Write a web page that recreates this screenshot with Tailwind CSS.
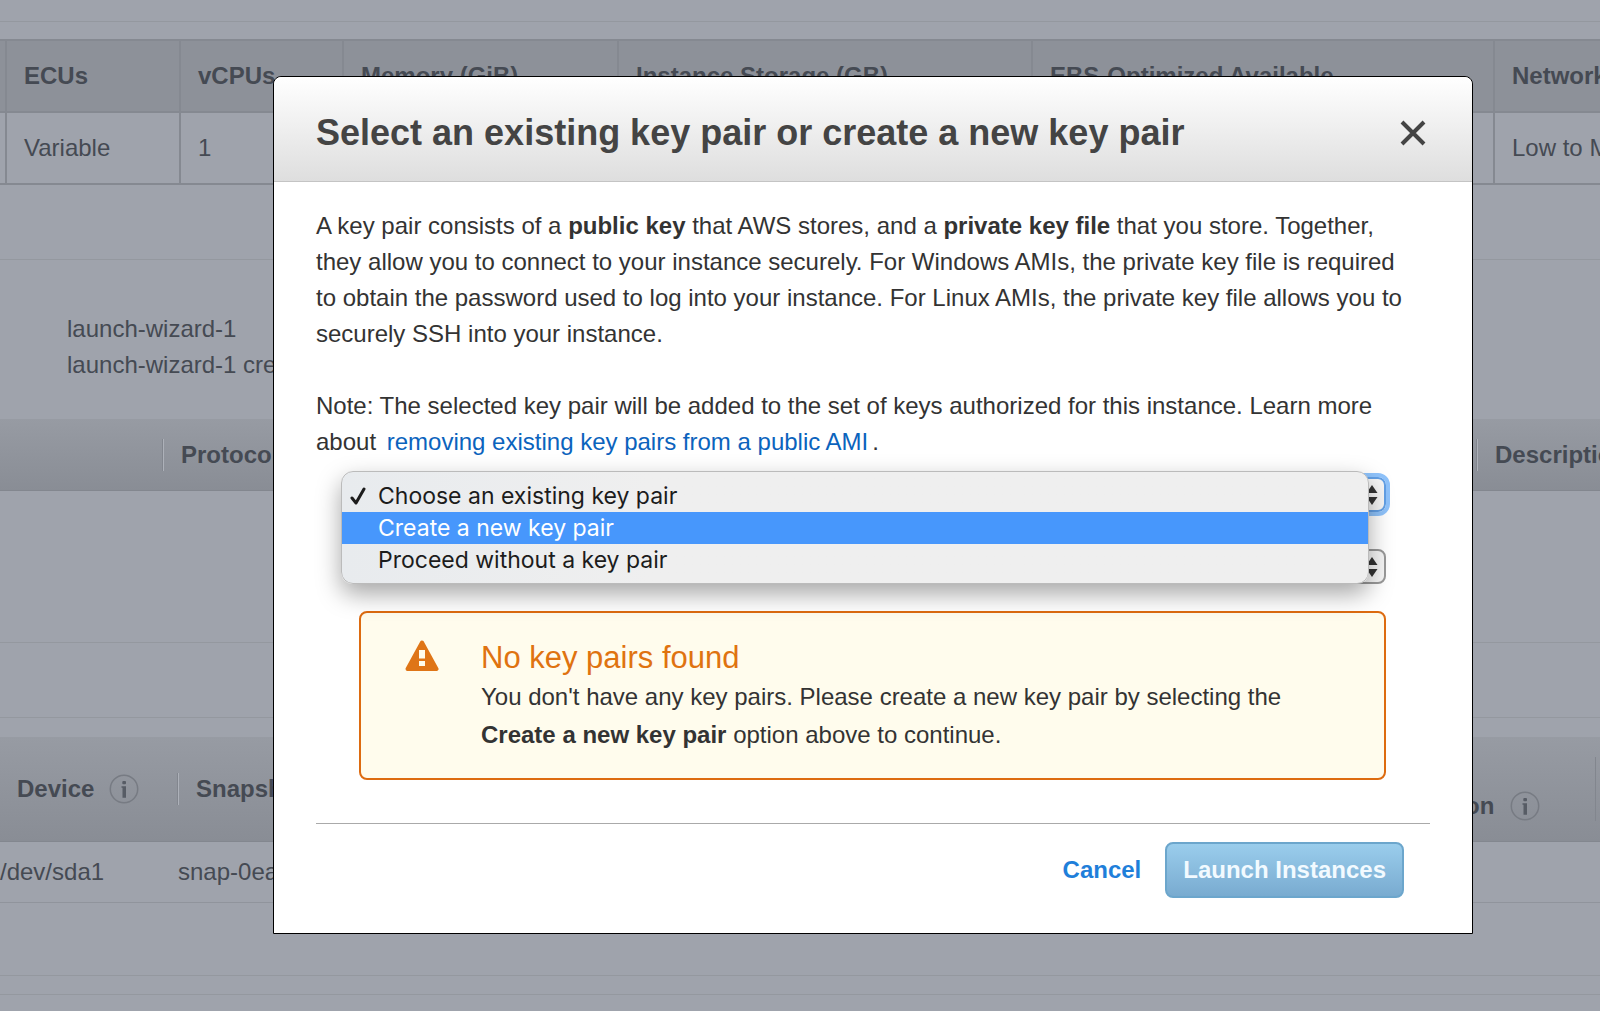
<!DOCTYPE html>
<html lang="en">
<head>
<meta charset="utf-8">
<meta name="viewport" content="width=device-width, initial-scale=1">
<title>Launch instance wizard</title>
<script src="https://cdn.jsdelivr.net/npm/@tailwindcss/browser@4"></script>
</head>
<body class="relative h-screen overflow-hidden bg-[#9fa3ac] font-['Liberation_Sans',Arial,sans-serif] text-2xl leading-9 text-[#454a53]">

<!-- Review page, dimmed behind the dialog -->
<main class="overflow-hidden whitespace-nowrap">
  <div class="h-[22px] border-b border-[#94989f]"></div>

  <section class="h-[238px] border-b border-[#94989f] pt-[17px]">
    <table class="w-full table-fixed border-collapse text-left">
      <colgroup>
        <col class="w-[6px]"><col class="w-[174px]"><col class="w-[163px]"><col class="w-[275px]"><col class="w-[414px]"><col class="w-[462px]"><col>
      </colgroup>
      <thead class="bg-[#8d9199]">
        <tr class="h-[72px] border-y-2 border-[#858991]">
          <td></td>
          <th class="border-l-2 border-[#858991] px-[17px]">ECUs</th>
          <th class="border-l-2 border-[#858991] px-[17px]">vCPUs</th>
          <th class="border-l-2 border-[#858991] px-[17px]">Memory (GiB)</th>
          <th class="border-l-2 border-[#858991] px-[17px]">Instance Storage (GB)</th>
          <th class="border-l-2 border-[#858991] px-[17px]">EBS-Optimized Available</th>
          <th class="border-l-2 border-[#858991] px-[17px]">Network Performance</th>
        </tr>
      </thead>
      <tbody>
        <tr class="h-[72px] border-b-2 border-[#858991]">
          <td></td>
          <td class="border-l-2 border-[#858991] px-[17px]">Variable</td>
          <td class="border-l-2 border-[#858991] px-[17px]">1</td>
          <td class="border-l-2 border-[#858991] px-[17px]"></td>
          <td class="border-l-2 border-[#858991] px-[17px]"></td>
          <td class="border-l-2 border-[#858991] px-[17px]"></td>
          <td class="border-l-2 border-[#858991] px-[17px]">Low to Moderate</td>
        </tr>
      </tbody>
    </table>
  </section>

  <section class="h-[383px] border-b border-[#94989f]">
    <div class="h-[159px] px-[67px] pt-[51px]">
      <p>launch-wizard-1</p>
      <p>launch-wizard-1 created</p>
    </div>
    <div class="flex h-[72px] items-center border-b border-[#83878f] bg-linear-to-b from-[#979ba3] to-[#898d95] leading-8 font-bold">
      <div class="w-[162px] shrink-0"></div>
      <div class="h-8 w-[1314px] shrink-0 border-l border-[#82868e] pl-[18px] shadow-[inset_1px_0_#adb1b9]">Protocol</div>
      <div class="h-8 shrink-0 border-l border-[#82868e] pl-[18px] shadow-[inset_1px_0_#adb1b9]">Description</div>
    </div>
  </section>

  <div class="h-[75px] border-b border-[#94989f]"></div>

  <section class="border-b border-[#90949c] pt-[19px]">
    <div class="flex h-[105px] items-center border-b border-[#83878f] bg-linear-to-b from-[#979ba3] to-[#898d95] leading-8 font-bold">
      <div class="flex w-[177px] shrink-0 items-center gap-[15px] pl-[17px]">Device
        <svg class="size-[30px]" viewBox="0 0 30 30" fill="none"><circle cx="15" cy="15" r="13.7" stroke="#777b83" stroke-width="1.5"/><path d="M12.500 12.300h4.500v11.400h-3.500v-9.900h-1z" fill="#575c65"/><rect x="13.300" y="7" width="3.700" height="3.200" rx="1" fill="#575c65"/></svg>
      </div>
      <div class="h-8 w-[1240px] shrink-0 border-l border-[#82868e] pl-[18px] shadow-[inset_1px_0_#adb1b9]">Snapshot</div>
      <div class="flex h-16 w-[179px] shrink-0 items-end gap-4 border-r border-[#82868e] pl-12 leading-[30px]">on
        <svg class="size-[30px]" viewBox="0 0 30 30" fill="none"><circle cx="15" cy="15" r="13.7" stroke="#777b83" stroke-width="1.5"/><path d="M12.500 12.300h4.500v11.400h-3.500v-9.900h-1z" fill="#575c65"/><rect x="13.300" y="7" width="3.700" height="3.200" rx="1" fill="#575c65"/></svg>
      </div>
    </div>
    <div class="flex h-[60px] items-center">
      <div class="w-[178px]">/dev/sda1</div>
      <div>snap-0ea</div>
    </div>
  </section>
  <div class="h-[73px] border-b border-[#94989f]"></div>
  <div class="h-[19px] border-b border-[#94989f]"></div>
</main>

<!-- Key pair dialog -->
<div class="absolute inset-x-0 top-0 pt-[76px] pr-[127px] pl-[273px]">
  <div role="dialog" aria-labelledby="dialog-title" class="rounded-t-lg border border-black bg-white pb-[35px] text-[#333]">
    <header class="flex h-[105px] items-center justify-between rounded-t-lg border-b border-[#c4c4c4] bg-linear-to-b from-white to-[#dedede] pt-2 pr-[46px] pl-[42px]">
      <h1 id="dialog-title" class="text-4xl font-bold text-[#444]">Select an existing key pair or create a new key pair</h1>
      <button type="button" aria-label="Close" class="size-[26px]">
        <svg viewBox="0 0 26 26" fill="none" stroke="#444" stroke-width="4" stroke-linecap="butt"><path d="M2 2l22 22M24 2L2 24"/></svg>
      </button>
    </header>

    <div class="px-[42px] pt-[26px]">
      <p class="mr-[10px]">A key pair consists of a <b>public key</b> that AWS stores, and a <b>private key file</b> that you store. Together, they allow you to connect to your instance securely. For Windows AMIs, the private key file is required to obtain the password used to log into your instance. For Linux AMIs, the private key file allows you to securely SSH into your instance.</p>
      <p class="mt-9 mr-[10px]">Note: The selected key pair will be added to the set of keys authorized for this instance. Learn more about <a href="#" class="mx-1 text-[#0b63bd]">removing existing key pairs from a public AMI</a>.</p>

      <div class="relative mt-[17px] pr-[44px] pl-[43px]">
        <div class="relative">
          <select aria-label="Key pair option" class="block h-[35px] w-full appearance-none rounded-lg border-2 border-[#62a0e6] bg-[#f6f6f6] px-3 text-transparent outline-4 outline-[#8fc3fb]"><option>Choose an existing key pair</option><option>Create a new key pair</option><option>Proceed without a key pair</option></select>
          <svg class="pointer-events-none absolute top-2 right-2 h-5 w-3" viewBox="0 0 12 20" fill="#333"><path d="M6 0l5.500 8H.5zM6 20l5.500-8H.5z"/></svg>
        </div>
        <div class="relative mt-[37px]">
          <select aria-label="Key pair" class="block h-[35px] w-full appearance-none rounded-lg border-2 border-[#999] bg-[#f6f6f6] px-3 text-transparent"><option>No key pairs found</option></select>
          <svg class="pointer-events-none absolute top-2 right-2 h-5 w-3" viewBox="0 0 12 20" fill="#333"><path d="M6 0l5.500 8H.5zM6 20l5.500-8H.5z"/></svg>
        </div>

        <!-- Open menu of the first drop-down -->
        <ul role="listbox" aria-label="Key pair options" class="absolute top-[-6px] right-[61px] left-[25px] z-10 rounded-xl border border-[#bbb] bg-linear-to-r from-[#e8ebee] via-[#efefef] via-30% to-[#efefef] pt-2 pb-[7px] font-['Inter','Liberation_Sans',sans-serif] text-[23px] leading-8 text-[#1c1c1c] shadow-[0_10px_24px_rgb(0_0_0/0.35)]">
          <li role="option" aria-selected="true" class="flex items-center gap-3 pl-2"><svg class="h-5 w-4" viewBox="0 0 16 20" fill="none" stroke="#1c1c1c" stroke-width="3" stroke-linecap="round" stroke-linejoin="round"><path d="M2 12l4 5L14 3"/></svg>Choose an existing key pair</li>
          <li role="option" aria-selected="false" class="bg-[#4797fc] pl-9 text-white">Create a new key pair</li>
          <li role="option" aria-selected="false" class="pl-9">Proceed without a key pair</li>
        </ul>
      </div>

      <div role="alert" class="mt-[27px] mr-[44px] ml-[43px] flex gap-[42px] rounded-lg border-2 border-[#dd6b10] bg-[#fffced] pt-[27px] pr-10 pb-6 pl-11">
        <svg class="h-8 w-[34px] shrink-0" viewBox="0 0 34 32"><path d="M17 2.500L31.500 29h-29z" fill="#df7517" stroke="#df7517" stroke-width="4" stroke-linejoin="round"/><path d="M14 10h6v8.500h-6zM14 21h6v5h-6z" fill="#fffced"/></svg>
        <div>
          <h2 class="text-[31px] leading-9 text-[#df7310]">No key pairs found</h2>
          <p class="mt-0.5 leading-[38px]">You don't have any key pairs. Please create a new key pair by selecting the<br><b>Create a new key pair</b> option above to continue.</p>
        </div>
      </div>

      <footer class="mt-[43px] flex items-center justify-end gap-6 border-t border-[#aaa] pt-[18px] pr-[26px] font-bold">
        <button type="button" class="text-[#1f7fda]">Cancel</button>
        <button type="button" class="h-14 rounded-lg border-2 border-[#6ca6cc] bg-linear-to-b from-[#9acdec] to-[#79abd0] px-4 text-[#f2faff]">Launch Instances</button>
      </footer>
    </div>
  </div>
</div>
</body>
</html>
